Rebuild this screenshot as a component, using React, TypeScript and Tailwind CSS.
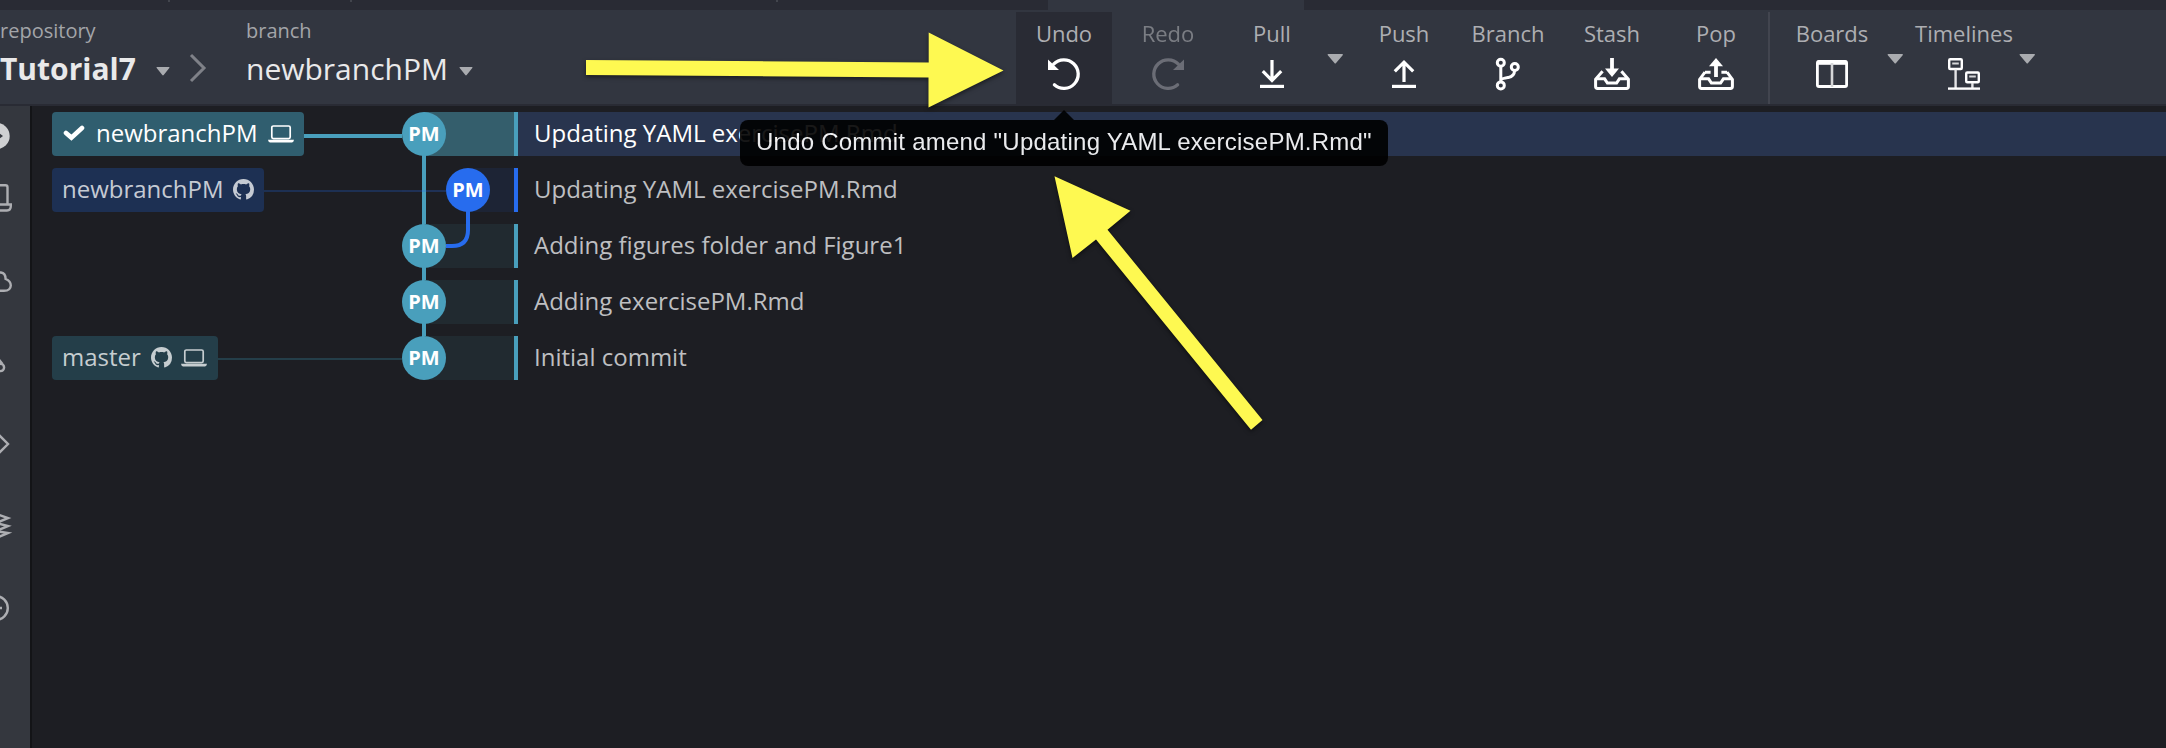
import React from "react";

const FONT = "font-['Open_Sans','Noto_Sans',sans-serif]";

function Caret({ className = "", small = false }: { className?: string; small?: boolean }) {
  return (
    <svg className={className} width={small ? 14 : 16.5} height={small ? 9 : 10} viewBox="0 0 16 10" preserveAspectRatio="none">
      <path d="M1.2 0H14.8Q16 .2 15.2 1.2L8.8 9Q8 10 7.2 9L.8 1.2Q0 .2 1.2 0Z" fill="#a9abaf" />
    </svg>
  );
}

function UndoIcon({ flip = false, color = "#fff" }: { flip?: boolean; color?: string }) {
  return (
    <svg width="34" height="34" viewBox="0 0 34 34" className={flip ? "-scale-x-100" : ""} fill="none">
      <path d="M6.6 7.2A14.3 14.3 0 1 1 7.4 27.8" stroke={color} strokeWidth="3.3" strokeLinecap="round" />
      <path d="M1 2.4V13H12Z" fill={color} />
    </svg>
  );
}

function PullIcon() {
  return (
    <svg width="34" height="34" viewBox="0 0 34 34" fill="none" stroke="#fff" strokeWidth="3.2">
      <path d="M17 3V24M7.8 14.2L17 23.4L26.2 14.2" />
      <path d="M5 29.4H29" />
    </svg>
  );
}

function PushIcon() {
  return (
    <svg width="34" height="34" viewBox="0 0 34 34" fill="none" stroke="#fff" strokeWidth="3.2">
      <path d="M17 25V5M7.8 14.4L17 5.2L26.2 14.4" />
      <path d="M5 29.4H29" />
    </svg>
  );
}

function BranchIcon() {
  return (
    <svg width="34" height="34" viewBox="0 0 34 34" fill="none" stroke="#fff" strokeWidth="3">
      <circle cx="9.8" cy="5.8" r="3.5" />
      <circle cx="9.8" cy="28.4" r="3.5" />
      <circle cx="23.8" cy="10" r="3.5" />
      <path d="M9.8 9.5V24.7M23.6 13.7C23.4 17.6 21 19.8 17.4 20.4C13.6 21 10.6 21.4 9.8 23" />
    </svg>
  );
}

function TrayIcon({ up = false }: { up?: boolean }) {
  return (
    <svg width="38" height="34" viewBox="0 0 38 34" fill="none" stroke="#fff">
      <path d={up ? "M8 15.2L2.6 22.4V29.6Q2.6 31.5 4.6 31.5H33.4Q35.4 31.5 35.4 29.6V22.4L30 15.2" : "M9.600 14.200L2.6 22.4V29.6Q2.6 31.5 4.6 31.5H33.4Q35.4 31.5 35.4 29.6V22.4L28.400 14.200"} strokeWidth="3" />
      {up && <path d="M8 15.2H13.6M24.4 15.2H30" strokeWidth="3" />}
      <path d="M3 21.8H11.6L14.4 26H23.6L26.4 21.8H35" strokeWidth="3" />
      {up ? (
        <>
          <path d="M19 20V8" strokeWidth="3.8" />
          <path d="M12 9.2L19 1L26 9.2Z" fill="#fff" stroke="none" />
        </>
      ) : (
        <>
          <path d="M19 1V13" strokeWidth="3.8" />
          <path d="M12 11.4L19 20L26 11.4Z" fill="#fff" stroke="none" />
        </>
      )}
    </svg>
  );
}

function BoardsIcon() {
  return (
    <svg width="34" height="34" viewBox="0 0 34 34" fill="none" stroke="#fff">
      <rect x="2.4" y="4.4" width="29.2" height="25.1" rx="1.6" strokeWidth="2.8" />
      <path d="M2.6 5.6H31.4" strokeWidth="4.4" />
      <path d="M17 6V30" strokeWidth="2.6" stroke="#d5d6d8" />
    </svg>
  );
}

function TimelinesIcon() {
  return (
    <svg width="34" height="34" viewBox="0 0 34 34" fill="none" stroke="#fff" strokeWidth="2.4">
      <rect x="2.2" y="2.2" width="12.6" height="9.800" rx="1" />
      <rect x="19.2" y="15.5" width="12.6" height="9.800" rx="1" />
      <path d="M5.2 6.4H11.8M22.2 19.6H28.8" strokeWidth="2" stroke="#d5d6d8" />
      <path d="M8.6 12.500V32M25.4 26V32" stroke="#e4e4e6" />
      <path d="M1 31.600H33" />
    </svg>
  );
}

function Laptop() {
  return (
    <svg width="26" height="18" viewBox="0 0 26 18" fill="none">
      <rect x="3.8" y="1" width="18.4" height="12.6" rx="1.6" stroke="currentColor" strokeWidth="1.7" />
      <path d="M0 14.8H26Q25.6 17.4 24 17.4H2Q.4 17.4 0 14.8Z" fill="currentColor" />
    </svg>
  );
}

function GitHub() {
  return (
    <svg className="-mt-px" width="21" height="21" viewBox="0 0 16 16" fill="currentColor">
      <path d="M8 0C3.58 0 0 3.58 0 8c0 3.54 2.29 6.53 5.47 7.59.4.07.55-.17.55-.38 0-.19-.01-.82-.01-1.49-2.01.37-2.53-.49-2.69-.94-.09-.23-.48-.94-.82-1.13-.28-.15-.68-.52-.01-.53.63-.01 1.08.58 1.23.82.72 1.21 1.87.87 2.33.66.07-.52.28-.87.51-1.07-1.78-.2-3.64-.89-3.64-3.95 0-.87.31-1.59.82-2.15-.08-.2-.36-1.02.08-2.12 0 0 .67-.21 2.2.82.64-.18 1.32-.27 2-.27s1.36.09 2 .27c1.53-1.04 2.2-.82 2.2-.82.44 1.1.16 1.92.08 2.12.51.56.82 1.27.82 2.15 0 3.07-1.87 3.75-3.65 3.95.29.25.54.73.54 1.48 0 1.07-.01 1.93-.01 2.2 0 .21.15.46.55.38A8.01 8.01 0 0 0 16 8c0-4.42-3.58-8-8-8" />
    </svg>
  );
}

function Tool({ label, active, dim, children }: { label: string; active?: boolean; dim?: boolean; children: React.ReactNode }) {
  return (
    <div className={`mx-1 flex h-[92px] w-24 shrink-0 flex-col items-center pt-1.5 ${active ? "bg-[#292b34]" : ""} ${dim ? "opacity-50" : ""}`}>
      <span className={`whitespace-nowrap text-[22px] leading-[30px] ${dim ? "text-[#c2c3c6]" : "text-[#adaeb2]"}`}>{label}</span>
      <div className="mt-[9px]">{children}</div>
    </div>
  );
}

function Drop() {
  return (
    <div className="w-7 shrink-0 pl-[3px] pt-[42px]">
      <Caret />
    </div>
  );
}

const rows = [
  { text: "Updating YAML exercisePM.Rmd", lane: 0, fill: "bg-[#345e6c]", bar: "bg-[#499fbc]" },
  { text: "Updating YAML exercisePM.Rmd", lane: 1, fill: "bg-[#1d2435]", bar: "bg-[#276cee]" },
  { text: "Adding figures folder and Figure1", lane: 0, fill: "bg-[#212a30]", bar: "bg-[#499fbc]" },
  { text: "Adding exercisePM.Rmd", lane: 0, fill: "bg-[#212a30]", bar: "bg-[#499fbc]" },
  { text: "Initial commit", lane: 0, fill: "bg-[#212a30]", bar: "bg-[#499fbc]" },
];

function RefLabel({ index }: { index: number }) {
  if (index === 0)
    return (
      <>
        <div className="flex h-11 w-[252px] shrink-0 items-center rounded bg-[#305e6f] pl-[11px] text-white">
          <svg className="-mt-0.5" width="22" height="16" viewBox="0 0 22 16">
            <path d="M3 8L8.400 12.600L19 3" fill="none" stroke="#fff" strokeWidth="4.6" strokeLinecap="round" />
          </svg>
          <span className="-mt-[3px] ml-[11px] w-[162px] whitespace-nowrap text-2xl leading-none">newbranchPM</span>
          <span className="ml-[10px]"><Laptop /></span>
        </div>
        <div className="mt-1 h-1 grow bg-[#499fbc]" />
      </>
    );
  if (index === 1)
    return (
      <>
        <div className="flex h-11 w-[212px] shrink-0 items-center rounded bg-[#1d3053] pl-[10px] text-[#c5cad3]">
          <span className="-mt-[3px] w-[162px] whitespace-nowrap text-2xl leading-none">newbranchPM</span>
          <span className="ml-[9px]"><GitHub /></span>
        </div>
        <div className="mt-0.5 h-0.5 grow bg-[#1d3053]" />
      </>
    );
  if (index === 4)
    return (
      <>
        <div className="flex h-11 w-[166px] shrink-0 items-center rounded bg-[#243e49] pl-[10px] text-[#c6cdd0]">
          <span className="-mt-[3px] w-[80px] whitespace-nowrap text-2xl leading-none">master</span>
          <span className="ml-[9px]"><GitHub /></span>
          <span className="ml-[9px]"><Laptop /></span>
        </div>
        <div className="mt-0.5 h-0.5 grow bg-[#243e49]" />
      </>
    );
  return null;
}

export default function App() {
  return (
    <div className={`relative flex h-[748px] w-[2166px] flex-col overflow-hidden bg-[#1d1e23] ${FONT}`}>
      <div className="flex h-[10px] shrink-0 bg-[#292b34]">
        <div className="h-0.5 w-[170px] border-r-2 border-[#42454d]" />
        <div className="h-0.5 w-[182px] border-r-2 border-[#42454d]" />
        <div className="h-0.5 w-[426px] border-r-2 border-[#42454d]" />
        <div className="ml-[270px] h-[10px] w-64 bg-[#323640]" />
      </div>

      <header className="flex h-24 shrink-0 border-b-2 border-[#292b34] bg-[#323640]">
        <div className="w-[246px] shrink-0 pt-[5px]">
          <div className="text-[20px] leading-8 text-[#a3a5a9]">repository</div>
          <div className="-mt-px flex items-center text-[#e9e9ea]">
            <span className="mt-px w-[156px] whitespace-nowrap text-[30px] font-bold leading-[43px]">Tutorial7</span>
            <Caret small className="mt-1.5" />
            <svg width="18" height="30" viewBox="0 0 18 30" className="ml-[19px]">
              <path d="M2 2L15 15L2 28" fill="none" stroke="#7f8188" strokeWidth="3" />
            </svg>
          </div>
        </div>
        <div className="w-[766px] shrink-0 pt-[5px]">
          <div className="text-[20px] leading-8 text-[#a3a5a9]">branch</div>
          <div className="-mt-px flex items-center text-[#e9e9ea]">
            <span className="mt-px w-[213px] whitespace-nowrap text-[30px] leading-[43px]">newbranchPM</span>
            <Caret small className="mt-1.5" />
          </div>
        </div>
        <div className="flex pt-0.5">
          <Tool label="Undo" active><UndoIcon /></Tool>
          <Tool label="Redo" dim><UndoIcon flip color="#a4a5ac" /></Tool>
          <Tool label="Pull"><PullIcon /></Tool>
          <Drop />
          <Tool label="Push"><PushIcon /></Tool>
          <Tool label="Branch"><BranchIcon /></Tool>
          <Tool label="Stash"><TrayIcon /></Tool>
          <Tool label="Pop"><TrayIcon up /></Tool>
          <div className="mr-[10px] h-[92px] w-0.5 bg-[#42454f]" />
          <Tool label="Boards"><BoardsIcon /></Tool>
          <Drop />
          <Tool label="Timelines"><TimelinesIcon /></Tool>
          <Drop />
        </div>
      </header>

      <div className="flex grow">
        <aside className="w-8 shrink-0 border-r-2 border-[#131417] bg-[#34373e]">
          <svg width="30" height="642" viewBox="0 106 30 642" fill="none" stroke="#adaeb2" strokeWidth="2.4">
            <circle cx="-3.500" cy="136" r="13.2" fill="#cfd0d2" stroke="none" />
            <path d="M-4 131L3 136L-4 141Z" fill="#34373e" stroke="none" />
            <path d="M-10 185.200H5.500Q7.500 185.200 7.500 187.200V204M-10 204.500H10.800V206Q10.800 210.500 7 210.500H-10" />
            <path d="M-8 277Q-3 272.200 1 272.500Q5.500 273 5.600 279Q10.800 281 10.800 285.500Q10.500 290.800 4 290.800H-10" />
            <path d="M-4 356L2.500 364" />
            <circle cx="0.500" cy="367.500" r="3.600" />
            <path d="M-4 432L8 444L-4 456" />
            <path d="M-4 514L8 518L-4 523L8 526L-4 531L8 533L-4 538" />
            <circle cx="-4" cy="608" r="11.800" />
            <path d="M-4 608H2" />
          </svg>
        </aside>

        <main className="flex grow flex-col gap-3 pt-1.5">
          {rows.map((r, i) => (
            <div key={i} className="flex h-11">
              <div className="ml-5 flex w-[350px] shrink-0 items-center"><RefLabel index={i} /></div>
              <div className="flex w-[116px] shrink-0">
                <div className={`relative flex grow ${r.lane ? "pl-11" : ""}`}>
                  {i < 4 && <div className="absolute left-5 top-[22px] h-14 w-1 bg-[#499fbc]" />}
                  {r.lane === 1 && <div className="absolute left-5 top-0 h-11 w-1 bg-[#499fbc]" />}
                  {r.lane === 1 && <div className="absolute left-0 top-[22px] h-0.5 w-11 bg-[#276cee]/25" />}
                  {r.lane === 1 && (
                    <svg className="absolute left-10 top-[22px] z-10" width="30" height="60" viewBox="0 0 30 60">
                      <path d="M26 21V40Q26 56 10 56H4" fill="none" stroke="#276cee" strokeWidth="4" />
                    </svg>
                  )}
                  <div className={`ml-[22px] grow ${r.fill}`} />
                  <div className={`absolute top-0 flex size-11 items-center justify-center rounded-full text-[20px] font-bold text-white ${r.lane ? "left-11" : "left-0"} ${r.bar}`}>
                    PM
                  </div>
                </div>
                <div className={`w-1 shrink-0 ${r.bar}`} />
              </div>
              <div className={`grow whitespace-nowrap pl-4 text-2xl leading-[41px] ${i === 0 ? "bg-[#28344e] text-white" : "text-[#bebfc1]"}`}>
                {r.text}
              </div>
            </div>
          ))}
        </main>
      </div>

      <div className="absolute left-[740px] top-[110px] flex w-[648px] flex-col items-center opacity-90">
        <svg width="20" height="10" viewBox="0 0 20 10"><path d="M0 10L10 0L20 10Z" /></svg>
        <div className="h-[46px] w-full whitespace-nowrap rounded-lg bg-black pl-4 font-['Liberation_Sans',sans-serif] text-2xl leading-[43px] tracking-[0.23px] text-white">
          Undo Commit amend "Updating YAML exercisePM.Rmd"
        </div>
      </div>

      <svg className="absolute left-0 top-0 z-20 drop-shadow-[0_2px_2px_rgba(0,0,0,0.5)]" width="2166" height="748" viewBox="0 0 2166 748" fill="#fef951">
        <path d="M586 60L928.700 62.500V32.500L1003.500 70.500L928.500 107.500V77.500L586 75Z" />
        <path d="M1054.500 176.300L1130.500 210.700L1107.500 229.700L1262.500 420L1251 429.700L1096 239.500L1072.500 258Z" />
      </svg>
    </div>
  );
}
